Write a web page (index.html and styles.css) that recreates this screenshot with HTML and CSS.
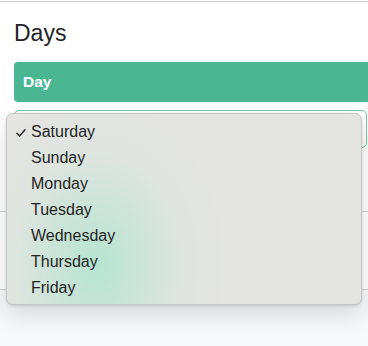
FILE: index.html
```html
<!DOCTYPE html>
<html>
<head>
<meta charset="utf-8">
<link rel="stylesheet" href="styles.css">
</head>
<body>
<div class="page">
  <div class="topline"></div>
  <section class="card">
    <h2 class="title">Days</h2>
    <div class="bar">Day</div>
    <div class="select"></div>
    <div class="gap1"></div>
    <div class="row"></div>
  </section>
  <div class="footer"></div>

  <div class="menu">
    <ul class="items">
      <li class="item checked"><svg class="check" width="10" height="8" viewBox="0 0 10 8"><path d="M1 4.2 L3.6 7 L9 0.8" fill="none" stroke="#222" stroke-width="1.4" stroke-linecap="round" stroke-linejoin="round"/></svg><span>Saturday</span></li>
      <li class="item"><span>Sunday</span></li>
      <li class="item"><span>Monday</span></li>
      <li class="item"><span>Tuesday</span></li>
      <li class="item"><span>Wednesday</span></li>
      <li class="item"><span>Thursday</span></li>
      <li class="item"><span>Friday</span></li>
    </ul>
  </div>
</div>
</body>
</html>
```

FILE: styles.css
```css
html, body {
  margin: 0;
  padding: 0;
  background: #ffffff;
  font-family: "Liberation Sans", Arial, sans-serif;
  color: #212529;
}
.page {
  position: relative;
  width: 368px;
  height: 346px;
  overflow: hidden;
  padding-top: 1px;
  box-sizing: border-box;
}
.topline {
  border-top: 1px solid #cccccc;
}
.card {
  padding: 0 0 0 14px;
}
.title {
  margin: 0;
  padding-top: 18px;
  font-size: 23px;
  font-weight: 400;
  line-height: 26px;
  color: #1f2327;
}
.bar {
  margin-top: 16px;
  height: 40px;
  background: #4bb792;
  border-radius: 4px 0 0 4px;
  margin-right: -6px;
  color: #ffffff;
  font-size: 15.5px;
  font-weight: 700;
  line-height: 40px;
  padding-left: 9px;
}
.select {
  margin-top: 8px;
  height: 36px;
  border: 1px solid #74c8a9;
  border-radius: 5px;
  margin-right: 1px;
}
.gap1 {
  height: 63px;
  border-bottom: 1px solid #d6d6d6;
  margin-left: -14px;
}
.row {
  height: 77px;
  border-bottom: 1px solid #d6d6d6;
  margin-left: -14px;
}
.footer {
  height: 60px;
  background: #f7f8fa;
}
.menu {
  position: absolute;
  left: 6px;
  top: 113px;
  width: 356px;
  height: 192px;
  box-sizing: border-box;
  border: 1px solid #c6c6c4;
  border-radius: 7px;
  background:
    radial-gradient(ellipse 130px 170px at 90px 150px, rgba(178, 228, 208, 0.9) 0%, rgba(190, 228, 212, 0.65) 35%, rgba(210, 228, 220, 0.3) 65%, rgba(228, 228, 226, 0) 100%),
    #e4e4e2;
  box-shadow: 0 10px 24px rgba(0, 0, 0, 0.13), 0 1px 3px rgba(0, 0, 0, 0.12);
}
.items {
  list-style: none;
  margin: 0;
  padding: 5px 0 0 0;
}
.item {
  position: relative;
  height: 26px;
  line-height: 26px;
  padding-left: 24px;
  font-size: 16px;
  color: #242424;
}
.check {
  position: absolute;
  left: 9px;
  top: 10px;
}
```
